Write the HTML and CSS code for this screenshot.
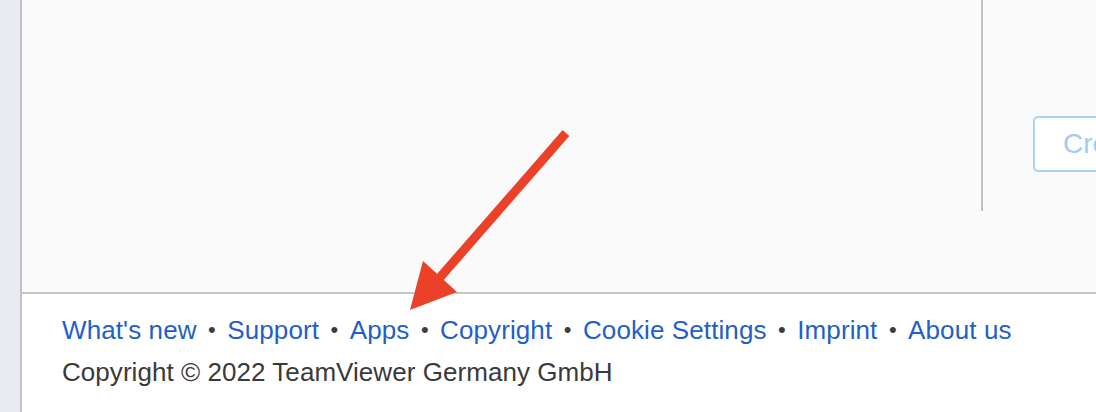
FILE: index.html
```html
<!DOCTYPE html>
<html lang="en">
<head>
<meta charset="utf-8">
<title>TeamViewer</title>
<link rel="stylesheet" href="styles.css">
</head>
<body>
<div class="app">
  <aside class="rail"></aside>
  <div class="page">
    <main class="content">
      <section class="col-main"></section>
      <section class="col-side">
        <button class="btn-create">Create</button>
      </section>
    </main>
    <footer class="footer">
      <nav class="links">
        <a href="#">What's new</a><span class="sep">•</span>
        <a href="#">Support</a><span class="sep">•</span>
        <a href="#">Apps</a><span class="sep">•</span>
        <a href="#">Copyright</a><span class="sep">•</span>
        <a href="#">Cookie Settings</a><span class="sep">•</span>
        <a href="#">Imprint</a><span class="sep">•</span>
        <a href="#">About us</a>
      </nav>
      <p class="copy">Copyright © 2022 TeamViewer Germany GmbH</p>
    </footer>
  </div>
</div>
<svg class="arrow" width="1096" height="412" viewBox="0 0 1096 412">
  <line x1="566" y1="133" x2="436" y2="282" stroke="#eb4128" stroke-width="9"/>
  <polygon points="410,310 423,261 457,292" fill="#eb4128"/>
</svg>
</body>
</html>
```
FILE: styles.css
```css
html, body {
  margin: 0;
  padding: 0;
  width: 1096px;
  height: 412px;
  overflow: hidden;
  background: #ffffff;
  font-family: "Liberation Sans", Arial, Helvetica, sans-serif;
}
.app {
  display: flex;
  height: 412px;
}
.rail {
  width: 20px;
  flex: none;
  background: #e9ecf2;
  border-right: 2px solid #c3c3c3;
}
.page {
  flex: 1;
  display: flex;
  flex-direction: column;
  min-width: 0;
}
.content {
  height: 292px;
  flex: none;
  background: #fafafa;
  border-bottom: 2px solid #c6c6c6;
  display: flex;
  align-items: flex-start;
}
.col-main {
  width: 959px;
  height: 211px;
  flex: none;
  border-right: 2px solid #c3c3c3;
}
.col-side {
  flex: 1;
  padding: 116px 0 0 50px;
  overflow: hidden;
}
.btn-create {
  display: block;
  height: 56px;
  width: 160px;
  box-sizing: border-box;
  background: #ffffff;
  border: 2px solid #a8d3f7;
  border-radius: 5px;
  color: #9fcdf5;
  font-family: "Liberation Sans", Arial, sans-serif;
  font-size: 28px;
  text-align: left;
  padding: 0 0 0 28px;
}
.footer {
  padding: 21px 0 0 40px;
}
.links {
  display: flex;
  align-items: center;
  height: 30px;
  font-size: 26px;
  line-height: 30px;
}
.links a {
  color: #1f5fc8;
  text-decoration: none;
  letter-spacing: 0.1px;
}
.sep {
  color: #3d3d3d;
  font-size: 22px;
  width: 30.7px;
  text-align: center;
}
.copy {
  margin: 12px 0 0;
  font-size: 26px;
  line-height: 30px;
  color: #3a3a3a;
  letter-spacing: 0.05px;
}
.arrow {
  position: absolute;
  left: 0;
  top: 0;
  pointer-events: none;
}
```
